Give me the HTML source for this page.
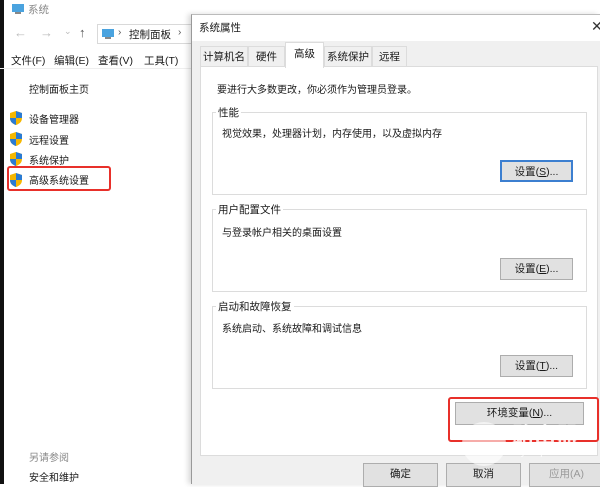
<!DOCTYPE html>
<html><head><meta charset="utf-8"><style>
*{margin:0;padding:0;box-sizing:border-box}
body{width:600px;height:484px;overflow:hidden;background:#fff;font-family:"Liberation Sans","Noto Sans CJK SC",sans-serif;font-size:10px;color:#1a1a1a;position:relative}
.a{position:absolute;white-space:nowrap}
.shield{position:absolute;width:12px;height:14px}
.btn{position:absolute;background:#e1e1e1;border:1px solid #adadad;text-align:center;line-height:20px;font-size:10.5px}
.grp{position:absolute;border:1px solid #dcdcdc}
.lbl{position:absolute;background:#fff;padding:0 2px;top:-8px;left:3px;font-size:10.5px}
</style></head><body>
<div class="a" style="left:0;top:0;width:4px;height:484px;background:#111"></div>
<svg class="a" style="left:11px;top:3px" width="14" height="12"><rect x="1" y="1" width="12" height="8" fill="#4aa3df"/><rect x="4" y="9" width="6" height="2" fill="#888"/></svg>
<div class="a" style="left:28px;top:2px;color:#888;font-size:10.5px">系统</div>
<div class="a" style="left:14px;top:25px;color:#bbb;font-size:13px">←</div>
<div class="a" style="left:40px;top:25px;color:#bbb;font-size:13px">→</div>
<div class="a" style="left:64px;top:26px;color:#bbb;font-size:9px">⌄</div>
<div class="a" style="left:79px;top:25px;color:#555;font-size:13px">↑</div>
<div class="a" style="left:97px;top:24px;width:100px;height:20px;border:1px solid #d9d9d9"></div>
<svg class="a" style="left:101px;top:28px" width="14" height="12"><rect x="1" y="1" width="12" height="8" fill="#4aa3df"/><rect x="4" y="9" width="6" height="2" fill="#888"/></svg>
<div class="a" style="left:118px;top:27px;font-size:10px;color:#555">›</div>
<div class="a" style="left:129px;top:27px;font-size:10.5px">控制面板</div>
<div class="a" style="left:178px;top:27px;font-size:10px;color:#555">›</div>
<div class="a" style="left:11px;top:53px;font-size:10.5px">文件(F)</div>
<div class="a" style="left:54px;top:53px;font-size:10.5px">编辑(E)</div>
<div class="a" style="left:98px;top:53px;font-size:10.5px">查看(V)</div>
<div class="a" style="left:144px;top:53px;font-size:10.5px">工具(T)</div>
<div class="a" style="left:0;top:68px;width:193px;height:1px;background:#eee"></div>
<div class="a" style="left:29px;top:81px">控制面板主页</div>
<svg class="shield" style="left:10px;top:111px" viewBox="0 0 12 14"><path d="M6 0L12 2V7C12 11 9 13 6 14C3 13 0 11 0 7V2Z" fill="#f5b700"/><path d="M6 0L12 2V7H6ZM6 7V14C3 13 0 11 0 7Z" fill="#2a7bd3"/></svg>
<div class="a" style="left:29px;top:111px">设备管理器</div>
<svg class="shield" style="left:10px;top:132px" viewBox="0 0 12 14"><path d="M6 0L12 2V7C12 11 9 13 6 14C3 13 0 11 0 7V2Z" fill="#f5b700"/><path d="M6 0L12 2V7H6ZM6 7V14C3 13 0 11 0 7Z" fill="#2a7bd3"/></svg>
<div class="a" style="left:29px;top:132px">远程设置</div>
<svg class="shield" style="left:10px;top:152px" viewBox="0 0 12 14"><path d="M6 0L12 2V7C12 11 9 13 6 14C3 13 0 11 0 7V2Z" fill="#f5b700"/><path d="M6 0L12 2V7H6ZM6 7V14C3 13 0 11 0 7Z" fill="#2a7bd3"/></svg>
<div class="a" style="left:29px;top:152px">系统保护</div>
<svg class="shield" style="left:10px;top:173px" viewBox="0 0 12 14"><path d="M6 0L12 2V7C12 11 9 13 6 14C3 13 0 11 0 7V2Z" fill="#f5b700"/><path d="M6 0L12 2V7H6ZM6 7V14C3 13 0 11 0 7Z" fill="#2a7bd3"/></svg>
<div class="a" style="left:29px;top:172px">高级系统设置</div>
<div class="a" style="left:7px;top:166px;width:104px;height:25px;border:2px solid #e8302a;border-radius:3px"></div>
<div class="a" style="left:29px;top:449px;color:#888">另请参阅</div>
<div class="a" style="left:29px;top:469px">安全和维护</div>
<div class="a" style="left:191px;top:14px;width:409px;height:470px;background:#f0f0f0;border-left:1px solid #999;border-top:1px solid #bbb;box-shadow:-3px 0 5px rgba(0,0,0,.15)"></div>
<div class="a" style="left:192px;top:15px;width:408px;height:26px;background:#fff"></div>
<div class="a" style="left:199px;top:20px;font-size:10.5px">系统属性</div>
<div class="a" style="left:591px;top:18px;font-size:14px;color:#333">✕</div>
<div class="a" style="left:200px;top:66px;width:398px;height:390px;background:#fff;border:1px solid #dcdcdc"></div>
<div class="a" style="left:200px;top:46px;width:48px;height:21px;border:1px solid #dcdcdc;border-bottom:none;text-align:center;line-height:20px;font-size:10.5px">计算机名</div>
<div class="a" style="left:248px;top:46px;width:37px;height:21px;border:1px solid #dcdcdc;border-bottom:none;text-align:center;line-height:20px;font-size:10.5px">硬件</div>
<div class="a" style="left:285px;top:42px;width:39px;height:26px;background:#fff;border:1px solid #dcdcdc;border-bottom:none;text-align:center;line-height:22px;font-size:10.5px">高级</div>
<div class="a" style="left:324px;top:46px;width:48px;height:21px;border:1px solid #dcdcdc;border-bottom:none;text-align:center;line-height:20px;font-size:10.5px">系统保护</div>
<div class="a" style="left:372px;top:46px;width:35px;height:21px;border:1px solid #dcdcdc;border-bottom:none;text-align:center;line-height:20px;font-size:10.5px">远程</div>
<div class="a" style="left:217px;top:81px">要进行大多数更改，你必须作为管理员登录。</div>
<div class="grp" style="left:212px;top:112px;width:375px;height:83px"><span class="lbl">性能</span></div>
<div class="a" style="left:222px;top:125px">视觉效果，处理器计划，内存使用，以及虚拟内存</div>
<div class="btn" style="left:500px;top:160px;width:73px;height:22px;border:2px solid #3c7fd0">设置(<u>S</u>)...</div>
<div class="grp" style="left:212px;top:209px;width:375px;height:83px"><span class="lbl">用户配置文件</span></div>
<div class="a" style="left:222px;top:224px">与登录帐户相关的桌面设置</div>
<div class="btn" style="left:500px;top:258px;width:73px;height:22px">设置(<u>E</u>)...</div>
<div class="grp" style="left:212px;top:306px;width:375px;height:83px"><span class="lbl">启动和故障恢复</span></div>
<div class="a" style="left:222px;top:320px">系统启动、系统故障和调试信息</div>
<div class="btn" style="left:500px;top:355px;width:73px;height:22px">设置(<u>T</u>)...</div>
<div class="btn" style="left:455px;top:402px;width:129px;height:23px">环境变量(<u>N</u>)...</div>
<div class="a" style="left:448px;top:397px;width:151px;height:45px;border:2px solid #e8302a;border-radius:3px"></div>
<div class="btn" style="left:363px;top:463px;width:75px;height:24px">确定</div>
<div class="btn" style="left:446px;top:463px;width:75px;height:24px">取消</div>
<div class="btn" style="left:529px;top:463px;width:75px;height:24px;color:#999">应用(A)</div>
<div class="a" style="left:462px;top:422px;width:44px;height:44px;border-radius:50%;background:rgba(255,255,255,.6)"></div>
<div class="a" style="left:512px;top:418px;font-size:22px;color:rgba(255,255,255,.85);font-weight:bold">路由器</div>
<div class="a" style="left:513px;top:447px;font-size:10px;color:rgba(255,255,255,.85)">luyouqi.com</div>
</body></html>
